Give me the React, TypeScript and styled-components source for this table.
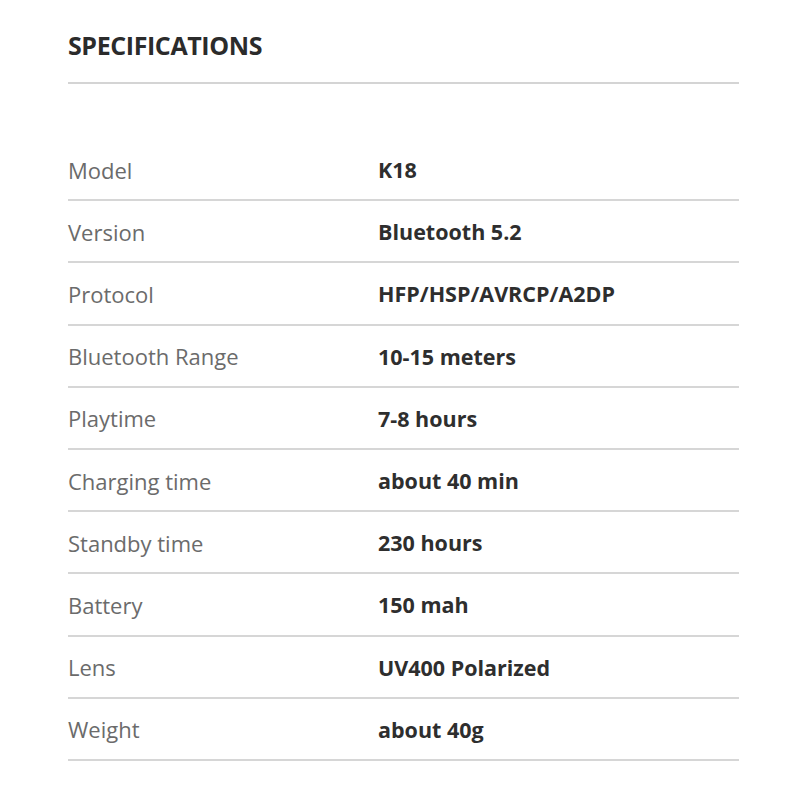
import styled, { createGlobalStyle } from 'styled-components';

const specs: [string, string][] = [
  ['Model', 'K18'],
  ['Version', 'Bluetooth 5.2'],
  ['Protocol', 'HFP/HSP/AVRCP/A2DP'],
  ['Bluetooth Range', '10-15 meters'],
  ['Playtime', '7-8 hours'],
  ['Charging time', 'about 40 min'],
  ['Standby time', '230 hours'],
  ['Battery', '150 mah'],
  ['Lens', 'UV400 Polarized'],
  ['Weight', 'about 40g'],
];

function App() {
  return (
    <>
      <GlobalStyle />
      <Page>
        <Title>SPECIFICATIONS</Title>
        <Table>
          {specs.map(([label, value]) => (
            <Row key={label}>
              <Label>{label}</Label>
              <Value>{value}</Value>
            </Row>
          ))}
        </Table>
      </Page>
    </>
  );
}

export default App;

const GlobalStyle = createGlobalStyle`
  body {
    margin: 0;
    background: #ffffff;
    font-family: 'Open Sans', 'Noto Sans', sans-serif;
  }
`;

const Page = styled.div`
  width: 800px;
  height: 800px;
  box-sizing: border-box;
  padding: 0 61px 0 68px;
`;

const Title = styled.h2`
  margin: 0;
  height: 84px;
  box-sizing: border-box;
  padding-top: 29px;
  border-bottom: 2px solid #d4d4d4;
  font-size: 25px;
  font-weight: 700;
  line-height: 32px;
  letter-spacing: -0.4px;
  color: #2b2b2b;
`;

const Table = styled.div`
  margin-top: 55px;
  display: flex;
  flex-direction: column;
`;

const Row = styled.div`
  height: 62.2px;
  box-sizing: border-box;
  display: grid;
  grid-template-columns: 310px 1fr;
  align-items: center;
  border-bottom: 2px solid #d6d6d6;
  padding-top: 1px;
`;

const Label = styled.span`
  font-size: 22px;
  font-weight: 400;
  letter-spacing: 0;
  color: #6b6b6b;
`;

const Value = styled.span`
  font-size: 21.5px;
  font-weight: 700;
  letter-spacing: 0;
  color: #2e2e2e;
`;
